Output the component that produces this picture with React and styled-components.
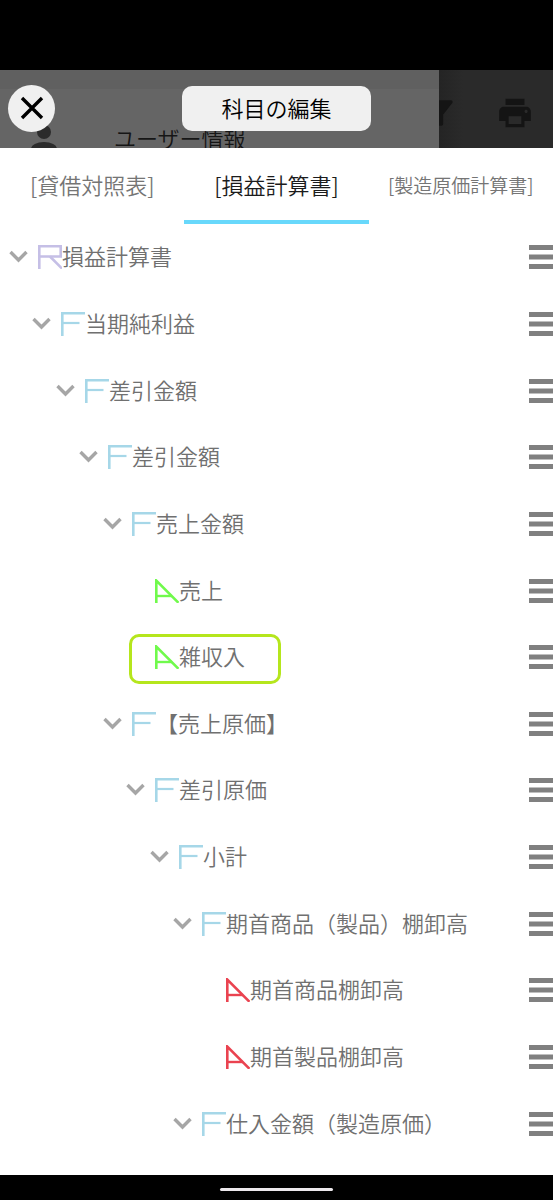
import React, { useState } from 'react';
import styled, { createGlobalStyle } from 'styled-components';
import { MdFilterAlt, MdPrint } from 'react-icons/md';

const GlobalStyle = createGlobalStyle`
  * {
    box-sizing: border-box;
  }

  body {
    margin: 0;
    background: #000;
    font-family: 'Noto Sans CJK JP', 'Noto Sans', sans-serif;
    font-size: 22px;
    font-weight: 350;
  }

  button {
    font: inherit;
    color: inherit;
    border: none;
    background: none;
    padding: 0;
    cursor: pointer;
  }
`;

const Screen = styled.div`
  min-height: 100vh;
  display: flex;
  flex-direction: column;
  padding-top: 70px;
  background: #000;
`;

const Header = styled.header`
  position: relative;
  height: 78px;
  display: grid;
  grid-template-columns: 1fr auto 1fr;
  align-items: center;
  padding: 0 8px 2px;
  overflow: hidden;
`;

/* Dimmed page that stays visible behind the sheet */
const Backdrop = styled.div`
  position: absolute;
  inset: 0;
  display: flex;
`;

const Drawer = styled.div`
  flex: 1;
  display: flex;
  align-items: flex-start;
  gap: 54px;
  padding: 52px 0 0 28px;
  background: linear-gradient(#606060 19px, #656565 19px);
  color: #161616;
  line-height: 30px;

  svg {
    margin-top: 1px;
    color: #2b2b2b;
  }
`;

const Toolbar = styled.div`
  width: 114px;
  display: flex;
  gap: 37px;
  padding-top: 24px;
  overflow: hidden;
  background: linear-gradient(90deg, #242424, #2a2a2a 24px);
  color: #141414;

  svg {
    flex: none;
  }

  svg:first-child {
    margin-left: -18px;
  }
`;

const CloseButton = styled.button`
  position: relative;
  width: 47px;
  height: 47px;
  display: grid;
  place-items: center;
  border-radius: 50%;
  background: #f0f0f0;
  color: #000;
`;

const Title = styled.h1`
  position: relative;
  margin: 0;
  padding: 0 39px 2px;
  border-radius: 10px;
  background: #f0f0f0;
  color: #000;
  font-size: 22px;
  font-weight: 350;
  line-height: 43px;
`;

const Sheet = styled.main`
  flex: 1;
  display: flex;
  flex-direction: column;
  padding-bottom: 18px;
  background: #fff;
`;

const Tabs = styled.div`
  display: grid;
  grid-template-columns: repeat(3, 1fr);
  height: 76px;
`;

const Tab = styled.button`
  border-bottom: 4px solid ${({ $active }) => ($active ? '#68d8fb' : 'transparent')};
  color: ${({ $active }) => ($active ? '#1c1c1c' : '#757575')};
  font-size: ${({ $small }) => ($small ? '19px' : '22px')};
  white-space: nowrap;
`;

const Tree = styled.ul`
  flex: 1;
  display: grid;
  grid-auto-rows: minmax(48px, 1fr);
  margin: 0;
  padding: 0;
  list-style: none;
`;

const Row = styled.li`
  display: flex;
  align-items: center;
  padding-left: ${({ $level }) => 6 + Math.floor(($level * 47) / 2)}px;
  color: #707070;
`;

const Toggle = styled.button`
  width: 24px;
  height: 24px;
  margin-right: 8px;
  color: #a6a6a6;

  svg {
    display: block;
  }
`;

const ToggleSpace = styled.span`
  width: 32px;
`;

const Item = styled.span`
  position: relative;
  display: flex;
  align-items: center;
  white-space: nowrap;

  svg {
    flex: none;
  }
`;

const Name = styled.span`
  padding-bottom: 4px;
  line-height: 32px;
`;

const Ring = styled.span`
  position: absolute;
  inset: -5px -36px -9px -26px;
  border: 3px solid #b5e61d;
  border-radius: 10px;
`;

const Handle = styled.button`
  width: 24px;
  height: 24px;
  margin-left: auto;
  color: #808080;

  svg {
    display: block;
  }
`;

const HomeBar = styled.footer`
  height: 25px;
  display: grid;
  place-items: center;
  padding-top: 4px;

  span {
    width: 113px;
    height: 3px;
    border-radius: 2px;
    background: #ece8ec;
  }
`;

const KINDS = {
  report: { color: '#c5bfe6', label: '帳票' },
  folder: { color: '#a6d7e8', label: '集計' },
  credit: { color: '#70fa4c', label: '貸方' },
  debit: { color: '#ea4350', label: '借方' },
};

const TABS = ['[貸借対照表]', '[損益計算書]', '[製造原価計算書]'];

const ROWS = [
  { level: 0, kind: 'report', name: '損益計算書' },
  { level: 1, kind: 'folder', name: '当期純利益' },
  { level: 2, kind: 'folder', name: '差引金額' },
  { level: 3, kind: 'folder', name: '差引金額' },
  { level: 4, kind: 'folder', name: '売上金額' },
  { level: 5, kind: 'credit', name: '売上' },
  { level: 5, kind: 'credit', name: '雑収入', marked: true },
  { level: 4, kind: 'folder', name: '【売上原価】' },
  { level: 5, kind: 'folder', name: '差引原価' },
  { level: 6, kind: 'folder', name: '小計' },
  { level: 7, kind: 'folder', name: '期首商品（製品）棚卸高' },
  { level: 8, kind: 'debit', name: '期首商品棚卸高' },
  { level: 8, kind: 'debit', name: '期首製品棚卸高' },
  { level: 7, kind: 'folder', name: '仕入金額（製造原価）' },
];

function KindIcon({ kind }) {
  const { color, label } = KINDS[kind];
  return (
    <svg width="24" height="24" fill="none" stroke={color} strokeWidth="2.6" role="img" aria-label={label}>
      {kind === 'report' && (
        <>
          <path d="M1.3 24V1.3H22.7V11.5H1.3" />
          <path d="M12 11.5L24 23.5" />
        </>
      )}
      {kind === 'folder' && (
        <>
          <path d="M1.3 24V1.3H24" />
          <path d="M1.3 11H18.5" strokeWidth="2.2" />
        </>
      )}
      {(kind === 'credit' || kind === 'debit') && (
        <>
          <path d="M1.3 24V1.6L23.5 23.8" strokeWidth="2.6" />
          <path d="M1.3 17H17" strokeWidth="2.4" />
        </>
      )}
    </svg>
  );
}

function TreeRow({ level, kind, name, marked }) {
  const isLeaf = kind === 'credit' || kind === 'debit';
  return (
    <Row $level={level}>
      {isLeaf ? (
        <ToggleSpace />
      ) : (
        <Toggle aria-label={`${name}を閉じる`}>
          <svg width="24" height="24" fill="none" stroke="currentColor" strokeWidth="3.4">
            <path d="M4.5 7L12.5 15L20.500 7" />
          </svg>
        </Toggle>
      )}
      <Item>
        <KindIcon kind={kind} />
        <Name>{name}</Name>
        {marked && <Ring />}
      </Item>
      <Handle aria-label={`${name}を移動`}>
        <svg width="24" height="24" fill="currentColor">
          <path d="M0 0H24V5H0ZM0 9.500H24V14.500H0ZM0 19H24V24H0Z" />
        </svg>
      </Handle>
    </Row>
  );
}

export default function App() {
  const [active, setActive] = useState(1);

  return (
    <>
      <GlobalStyle />
      <Screen>
        <Header>
          <Backdrop aria-hidden="true">
            <Drawer>
              <svg width="32" height="32" fill="currentColor">
                <circle cx="16" cy="9" r="7" />
                <ellipse cx="16" cy="26" rx="13" ry="7" />
              </svg>
              ユーザー情報
            </Drawer>
            <Toolbar>
              <MdFilterAlt size={38} />
              <MdPrint size={38} />
            </Toolbar>
          </Backdrop>
          <CloseButton aria-label="閉じる">
            <svg width="24" height="24" fill="none" stroke="currentColor" strokeWidth="3.4">
              <path d="M2 2L22 22M22 2L2 22" />
            </svg>
          </CloseButton>
          <Title>科目の編集</Title>
        </Header>

        <Sheet>
          <Tabs role="tablist">
            {TABS.map((tab, i) => (
              <Tab
                key={tab}
                role="tab"
                aria-selected={i === active}
                $active={i === active}
                $small={tab.length > 7}
                onClick={() => setActive(i)}
              >
                {tab}
              </Tab>
            ))}
          </Tabs>
          <Tree>
            {ROWS.map((row, i) => (
              <TreeRow key={i} {...row} />
            ))}
          </Tree>
        </Sheet>

        <HomeBar>
          <span />
        </HomeBar>
      </Screen>
    </>
  );
}
